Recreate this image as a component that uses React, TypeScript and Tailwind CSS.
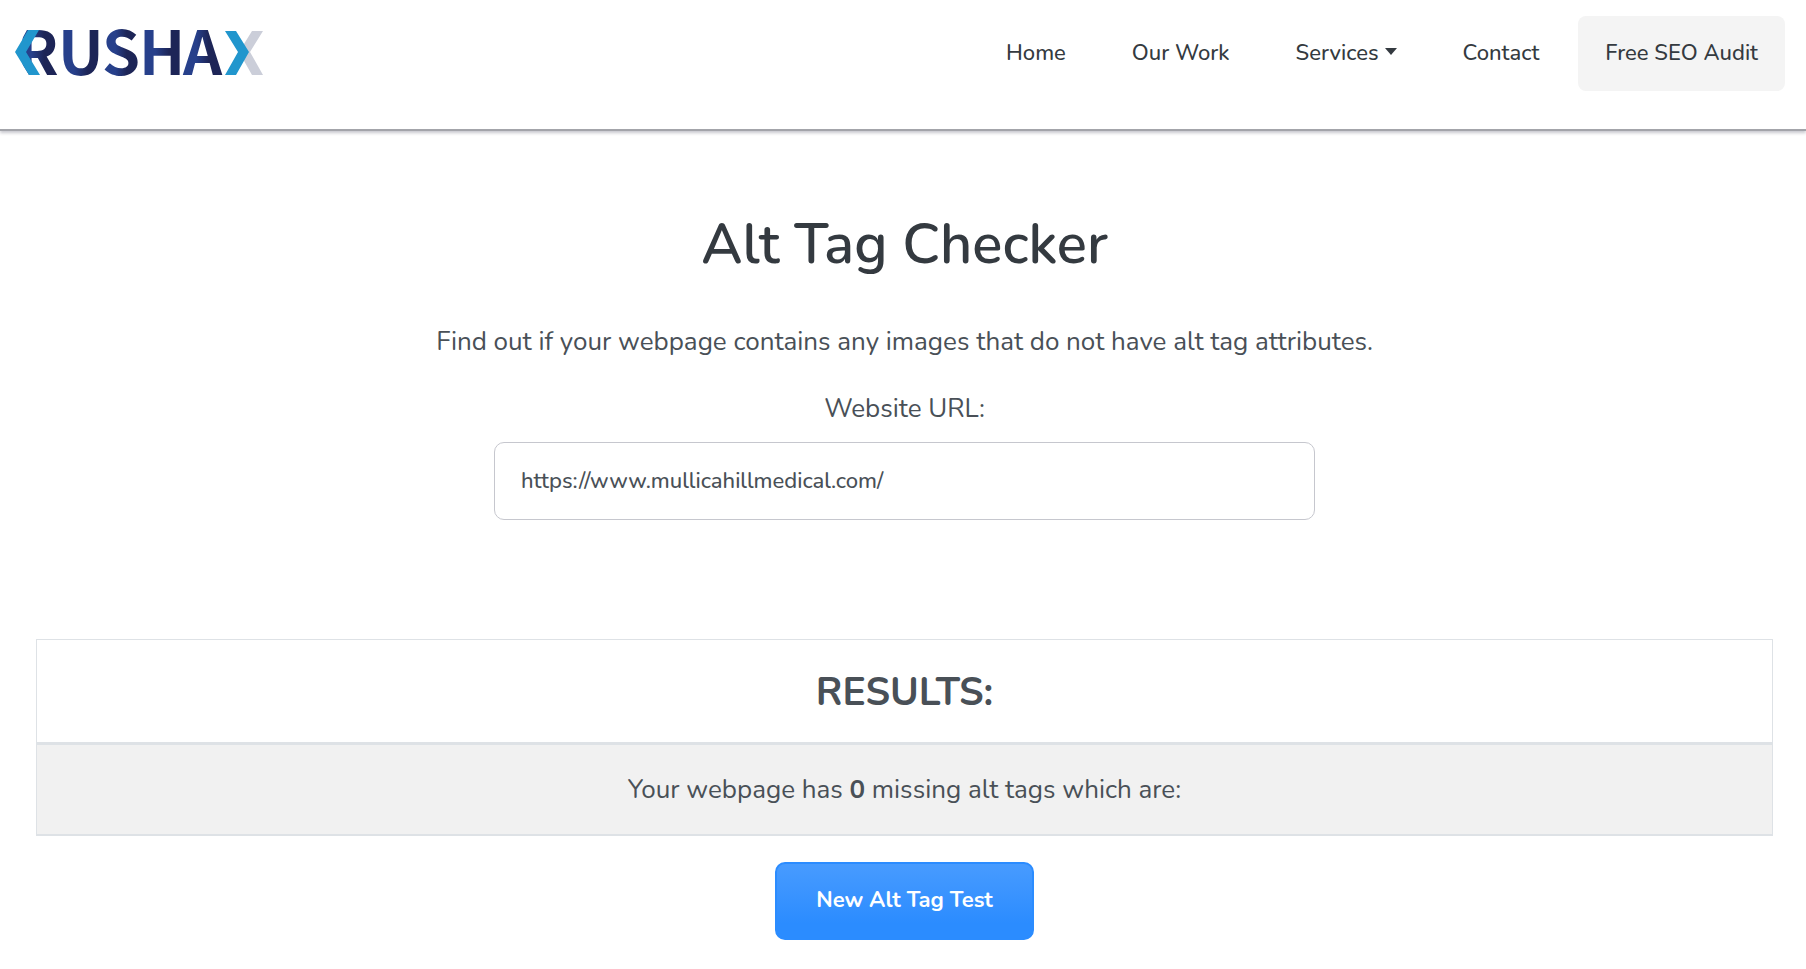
import { useState } from "react";

const navLinks = [
  { label: "Home", href: "#home" },
  { label: "Our Work", href: "#work" },
  { label: "Services", href: "#services", dropdown: true },
  { label: "Contact", href: "#contact" },
];

const logoLetters = [
  { char: "U", x: 43 },
  { char: "S", x: 87 },
  { char: "H", x: 124 },
  { char: "A", x: 168 },
];

function Logo() {
  return (
    <svg
      viewBox="0 -24 250 90"
      className="h-[90px] w-[250px] font-['Noto_Sans_CJK_SC',sans-serif] text-[61px] font-bold"
      role="img"
      aria-label="Rushax"
    >
      <defs>
        <linearGradient id="letter" x1="0" y1="0" x2="1" y2="0">
          <stop offset="0.35" stopColor="#27408b" />
          <stop offset="0.65" stopColor="#1d2557" />
        </linearGradient>
        <clipPath id="chevron-edge">
          <polygon points="13,0 50,0 50,50 14,50 14,47 0,24" />
        </clipPath>
      </defs>
      <g clipPath="url(#chevron-edge)">
        <text x="2" y="47" fill="url(#letter)">
          R
        </text>
      </g>
      {logoLetters.map((letter) => (
        <text key={letter.char} x={letter.x} y="47" fill="url(#letter)">
          {letter.char}
        </text>
      ))}
      <polygon points="0,24 13,2 24,2 11,24 25,47 14,47" fill="#2196cd" />
      <polygon points="237,3 248,3 235,24 248,47 237,47 224,24" fill="#cbced9" />
      <polygon points="210,3 221,3 234,24 221,47 210,47 223,24" fill="#2196cd" />
    </svg>
  );
}

function Header() {
  return (
    <header className="flex items-start justify-between border-b-2 border-[#a3a4aa] pr-[21px] pl-[15px] shadow-[0_2px_3px_rgba(30,30,60,0.25)]">
      <a href="#home" className="mt-1">
        <Logo />
      </a>
      <nav className="flex gap-3 pt-4 pb-[38px] text-[22px] leading-[35px] font-medium text-[#343a40]">
        {navLinks.map((link) => (
          <a key={link.label} href={link.href} className="flex items-center px-[27px] py-5">
            {link.label}
            {link.dropdown && (
              <span className="mb-1 ml-[6px] border-x-[6px] border-t-[7px] border-x-transparent border-t-[#343a40]" />
            )}
          </a>
        ))}
        <a href="#audit" className="rounded-lg bg-[#f4f4f4] px-[27px] py-5">
          Free SEO Audit
        </a>
      </nav>
    </header>
  );
}

export default function App() {
  const [url, setUrl] = useState("https://www.mullicahillmedical.com/");

  return (
    <div className="bg-white font-[Nunito,Lato,sans-serif] text-[#495057]">
      <Header />

      <main className="flex flex-col items-center pr-[33px] pl-9 text-center">
        <h1 className="mt-[78px] text-[56px] leading-[72px] font-semibold text-[#343a40]">
          Alt Tag Checker
        </h1>
        <p className="mt-[41px] text-[26px] leading-10">
          Find out if your webpage contains any images that do not have alt tag attributes.
        </p>

        <label htmlFor="url" className="mt-[27px] text-[26px] leading-10">
          Website URL:
        </label>
        <input
          id="url"
          type="text"
          value={url}
          onChange={(e) => setUrl(e.target.value)}
          className="mt-[13px] h-[78px] w-full max-w-[821px] rounded-[10px] border border-[#c6c7ce] px-[26px] text-[22px] font-medium text-[#495057] focus:outline-none"
        />

        <table className="mt-[119px] w-full border-collapse border border-b-2 border-[#dee2e6]">
          <thead>
            <tr>
              <th className="h-[104px] border-b-[3px] border-[#dee2e6] pt-1 text-[39px] font-bold">
                RESULTS:
              </th>
            </tr>
          </thead>
          <tbody>
            <tr>
              <td className="h-[91px] bg-[#f1f1f1] text-[26px]">
                Your webpage has <b>0</b> missing alt tags which are:
              </td>
            </tr>
          </tbody>
        </table>

        <button
          type="button"
          className="mt-[26px] h-[78px] rounded-[10px] border-2 border-[#2b8cff] bg-linear-to-b from-[#479bff] to-[#2b8cff] to-80% px-[39px] text-[22px] font-bold text-white"
        >
          New Alt Tag Test
        </button>
      </main>
    </div>
  );
}
